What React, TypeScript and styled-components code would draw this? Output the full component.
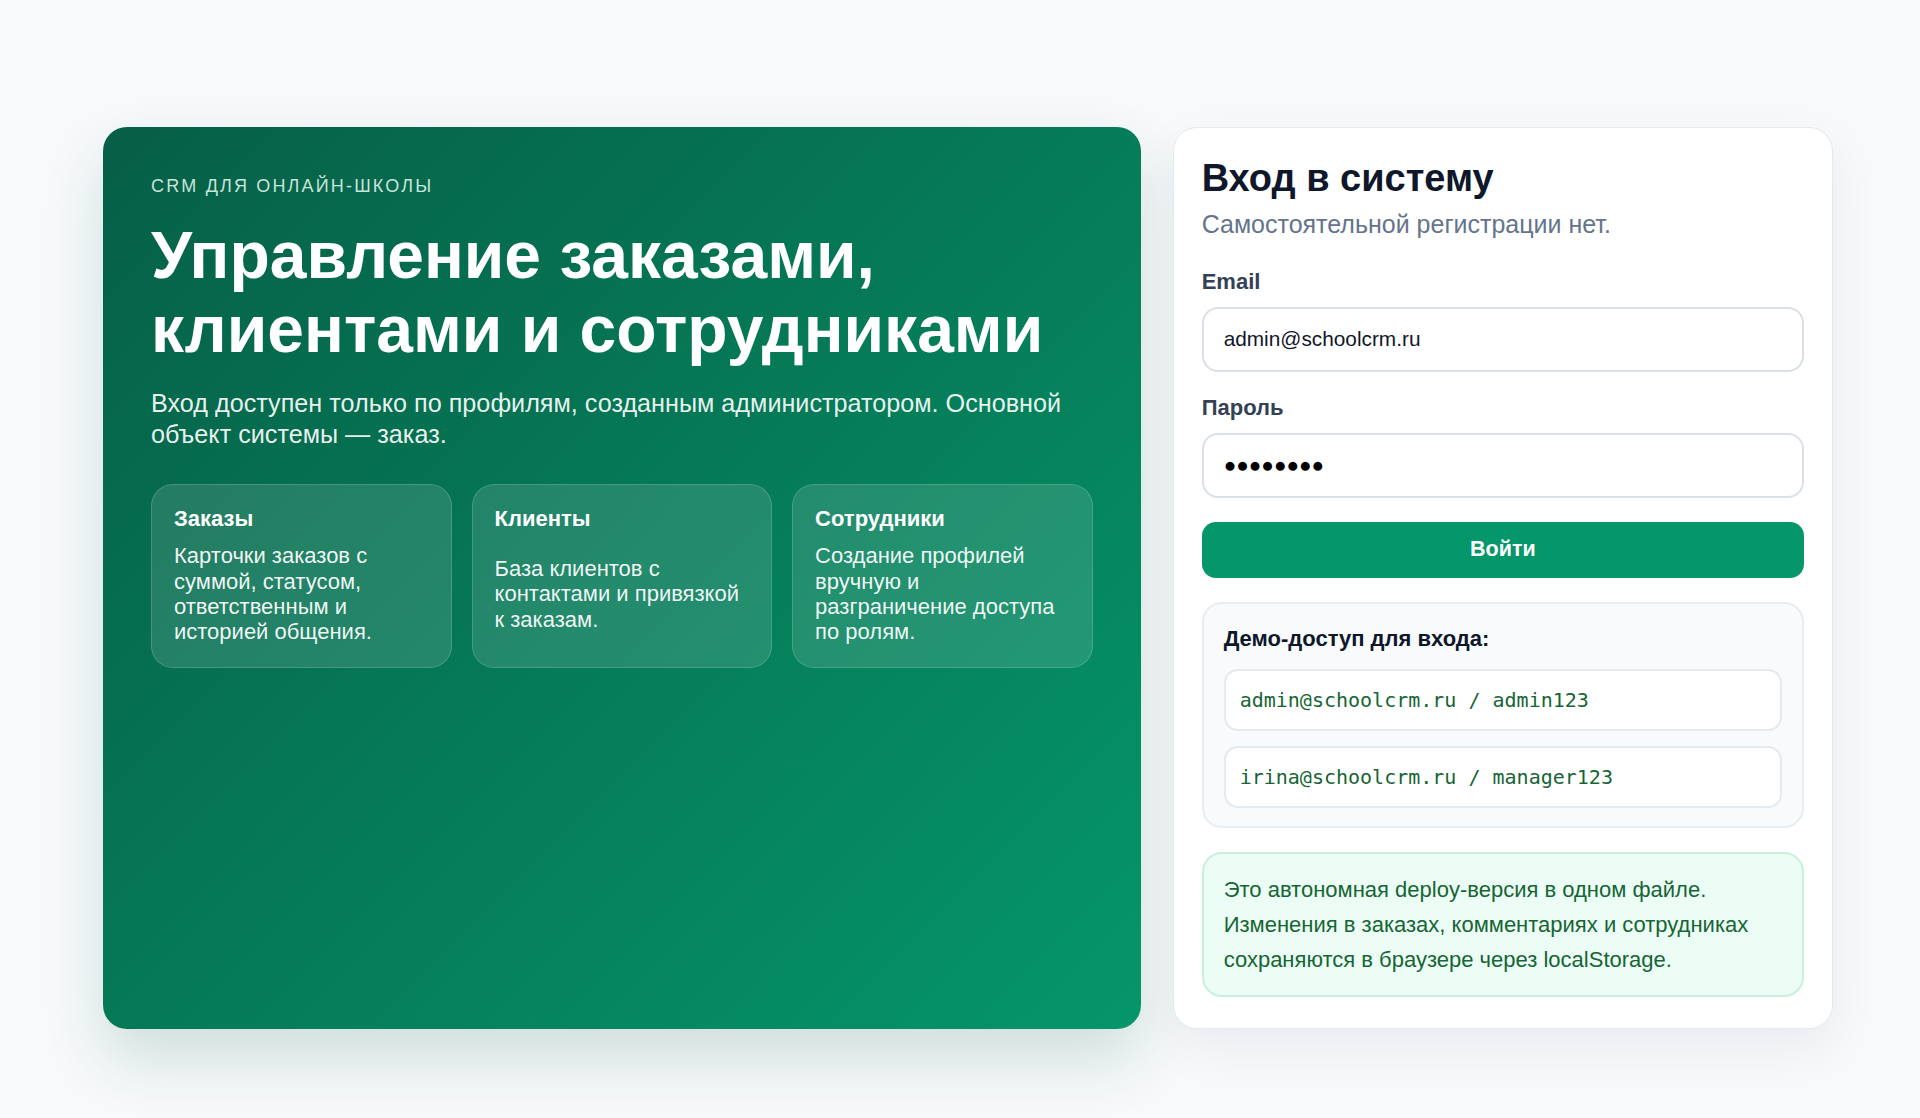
import styled, { createGlobalStyle } from 'styled-components';

const GlobalStyle = createGlobalStyle`
	body {
		margin: 0;
		background: #f7f9fb;
		font-family: 'Liberation Sans', Arial, sans-serif;
	}
`;

const Page = styled.main`
	min-height: 100vh;
	box-sizing: border-box;
	padding: 127px 87px 0 103px;
`;

const Shell = styled.div`
	display: grid;
	grid-template-columns: minmax(0, 1.1fr) minmax(0, 0.7fr);
	gap: 32px;
`;

const Hero = styled.section`
	display: flex;
	flex-direction: column;
	padding: 48px;
	border-radius: 24px;
	color: #fff;
	background: linear-gradient(135deg, #065f46 0%, #059669 100%);
	box-shadow: 0 30px 60px rgba(6, 95, 70, 0.16);
`;

const Eyebrow = styled.div`
	font-size: 18px;
	line-height: 22px;
	letter-spacing: 0.12em;
	text-transform: uppercase;
	color: rgba(236, 253, 245, 0.85);
`;

const HeroTitle = styled.h1`
	margin: 22px 0 0;
	font-size: 66px;
	line-height: 73.6px;
	font-weight: 700;
`;

const HeroText = styled.p`
	margin: 22px 0 0;
	font-size: 25.2px;
	line-height: 30.5px;
	color: rgba(255, 255, 255, 0.92);
`;

const Features = styled.div`
	display: grid;
	grid-template-columns: repeat(3, minmax(0, 1fr));
	gap: 20px;
	margin-top: 35px;
`;

const Feature = styled.article`
	display: grid;
	gap: 12px;
	padding: 22px;
	border-radius: 22px;
	border: 1px solid rgba(255, 255, 255, 0.16);
	background: rgba(255, 255, 255, 0.12);
`;

const FeatureTitle = styled.strong`
	font-size: 22px;
	line-height: 24px;
`;

const FeatureText = styled.span`
	font-size: 22px;
	line-height: 25.4px;
	color: rgba(255, 255, 255, 0.94);
`;

const LoginCard = styled.section`
	padding: 29px 28px 31px;
	border-radius: 24px;
	border: 1px solid #e5e9f0;
	background: #fff;
	box-shadow: 0 18px 50px rgba(15, 23, 42, 0.06);
`;

const LoginTitle = styled.h2`
	margin: 0;
	font-size: 38px;
	line-height: 43px;
	font-weight: 700;
	color: #0f172a;
`;

const LoginHint = styled.p`
	margin: 10px 0 0;
	font-size: 25px;
	line-height: 29.5px;
	color: #64748b;
`;

const Form = styled.form`
	display: flex;
	flex-direction: column;
	gap: 24px;
	margin-top: 30px;
`;

const Field = styled.label`
	display: flex;
	flex-direction: column;
	gap: 13px;
`;

const FieldLabel = styled.span`
	font-size: 22px;
	line-height: 24px;
	font-weight: 700;
	color: #334155;
`;

const Input = styled.input<{ $masked?: boolean }>`
	width: 100%;
	height: 65px;
	box-sizing: border-box;
	padding: 0 20px;
	border: 2px solid #d9e0e8;
	border-radius: 16px;
	background: #fff;
	color: ${(p) => (p.$masked ? '#000' : '#0f172a')};
	font-family: 'Liberation Sans', Arial, sans-serif;
	font-size: 20.8px;
	letter-spacing: normal;
	outline: none;
`;

const SubmitButton = styled.button`
	height: 56px;
	border: none;
	border-radius: 14px;
	background: #059669;
	color: #fff;
	font-family: inherit;
	font-size: 21.5px;
	font-weight: 700;
	cursor: pointer;
`;

const DemoBox = styled.div`
	display: flex;
	flex-direction: column;
	gap: 15px;
	padding: 21px 20px 18px;
	border: 2px solid #e8edf2;
	border-radius: 20px;
	background: #f8fafc;
`;

const DemoTitle = styled.div`
	margin-bottom: 1px;
	font-size: 22px;
	line-height: 28px;
	font-weight: 700;
	color: #0f172a;
`;

const Credential = styled.code`
	display: block;
	padding: 17px 14px;
	border: 2px solid #e5eaf0;
	border-radius: 14px;
	background: #fff;
	font-family: 'DejaVu Sans Mono', 'Liberation Mono', monospace;
	font-size: 20px;
	line-height: 24px;
	color: #166534;
`;

const Note = styled.div`
	padding: 18px 20px;
	border: 2px solid #c9f0dc;
	border-radius: 20px;
	background: #ecfdf5;
	font-size: 22px;
	line-height: 35px;
	color: #166534;
`;

const features = [
	{ title: 'Заказы', text: 'Карточки заказов с суммой, статусом, ответственным и историей общения.' },
	{ title: 'Клиенты', text: 'База клиентов с контактами и привязкой к заказам.' },
	{ title: 'Сотрудники', text: 'Создание профилей вручную и разграничение доступа по ролям.' },
];

const credentials = ['admin@schoolcrm.ru / admin123', 'irina@schoolcrm.ru / manager123'];

const App: React.FC = (): React.ReactElement => {
	return (
		<Page>
			<GlobalStyle />
			<Shell>
				<Hero>
					<Eyebrow>CRM для онлайн-школы</Eyebrow>
					<HeroTitle>
						Управление заказами,
						<br />
						клиентами и сотрудниками
					</HeroTitle>
					<HeroText>
						Вход доступен только по профилям, созданным администратором. Основной объект системы — заказ.
					</HeroText>
					<Features>
						{features.map((f) => (
							<Feature key={f.title}>
								<FeatureTitle>{f.title}</FeatureTitle>
								<FeatureText>{f.text}</FeatureText>
							</Feature>
						))}
					</Features>
				</Hero>

				<LoginCard>
					<LoginTitle>Вход в систему</LoginTitle>
					<LoginHint>Самостоятельной регистрации нет.</LoginHint>
					<Form onSubmit={(e) => e.preventDefault()}>
						<Field>
							<FieldLabel>Email</FieldLabel>
							<Input type="email" defaultValue="admin@schoolcrm.ru" />
						</Field>
						<Field>
							<FieldLabel>Пароль</FieldLabel>
							{/* masked value, drawn with solid circles */}
							<Input $masked type="text" readOnly value="●●●●●●●●" />
						</Field>
						<SubmitButton type="submit">Войти</SubmitButton>
						<DemoBox>
							<DemoTitle>Демо-доступ для входа:</DemoTitle>
							{credentials.map((c) => (
								<Credential key={c}>{c}</Credential>
							))}
						</DemoBox>
						<Note>
							Это автономная deploy-версия в одном файле. Изменения в заказах, комментариях и сотрудниках
							сохраняются в браузере через localStorage.
						</Note>
					</Form>
				</LoginCard>
			</Shell>
		</Page>
	);
};

export default App;
